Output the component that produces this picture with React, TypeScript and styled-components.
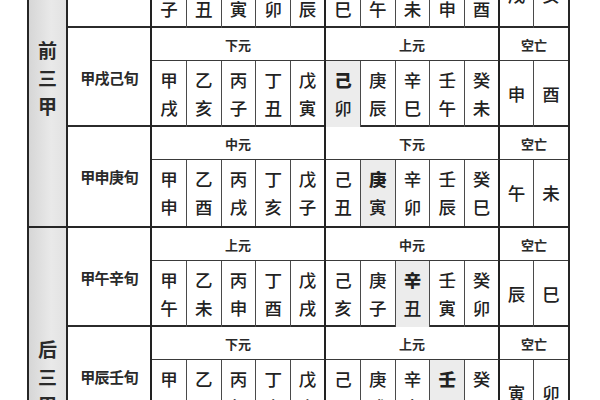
import React from "react";
import styled, { createGlobalStyle } from "styled-components";

const Global = createGlobalStyle`
  html, body { margin: 0; padding: 0; background: #fff; overflow: hidden; }
  body { font-family: "Noto Sans CJK SC", "Noto Sans", sans-serif; color: #1e1e1e; }
`;

const Table = styled.div`
  margin-top: -71px;
  margin-left: 27px;
  width: 543px;
  box-sizing: border-box;
  border-left: 2px solid #262626;
  border-right: 2px solid #262626;
  display: flex;
  flex-direction: column;
`;

const Group = styled.div`
  display: flex;
  border-bottom: 2px solid #262626;
`;

const GroupLabel = styled.div`
  width: 39px;
  box-sizing: border-box;
  border-right: 2px solid #262626;
  background: linear-gradient(to right, #d6d6d6, #e9e9e9 60%, #e2e2e2);
  display: flex;
  flex-direction: column;
  align-items: center;
  justify-content: center;
  font-size: 19px;
  font-weight: 700;
  line-height: 28px;
  color: #2a2a2a;
`;

const Blocks = styled.div`
  display: flex;
  flex-direction: column;
  width: 500px;
`;

const Block = styled.div<{ $last?: boolean }>`
  display: grid;
  grid-template-columns: 84px repeat(10, 34.8px) repeat(2, 34px);
  grid-template-rows: 33px 66px;
  border-bottom: ${(p) => (p.$last ? "none" : "2px solid #2b2b2b")};
  height: 99px;
  box-sizing: border-box;
`;

const Label = styled.div`
  grid-row: 1 / 3;
  grid-column: 1;
  border-right: 2px solid #222;
  display: flex;
  align-items: center;
  justify-content: center;
  font-size: 15px;
  font-weight: 700;
  letter-spacing: -0.6px;
  color: #2a2a2a;
`;

const Header = styled.div<{ $from: number; $to: number; $edge?: boolean }>`
  grid-row: 1;
  grid-column: ${(p) => `${p.$from} / ${p.$to}`};
  border-right: ${(p) => (p.$edge ? "none" : "2px solid #222")};
  border-bottom: 1.5px solid #3a3a3a;
  display: flex;
  align-items: center;
  justify-content: center;
  font-size: 13px;
  font-weight: 700;
  color: #2a2a2a;
`;

const Cell = styled.div<{ $thick?: boolean; $edge?: boolean; $hi?: boolean }>`
  grid-row: 2;
  border-right: ${(p) =>
    p.$edge ? "none" : p.$thick ? "2px solid #222" : "1.3px solid #4a4a4a"};
  background: ${(p) => (p.$hi ? "#ececec" : "transparent")};
  display: flex;
  flex-direction: column;
  align-items: center;
  justify-content: center;
  font-size: 17.5px;
  font-weight: 500;
  line-height: 28px;
  color: #222;
`;

const Stem = styled.span<{ $bold?: boolean }>`
  font-weight: ${(p) => (p.$bold ? 900 : 500)};
`;

const Branch = styled.span``;

type BlockData = {
  label: string;
  left: string;
  right: string;
  branches: string[];
  void: [string, string];
  hi: number;
};

const stems = ["甲", "乙", "丙", "丁", "戊", "己", "庚", "辛", "壬", "癸"];

const groups: { name: string; blocks: BlockData[] }[] = [
  {
    name: "前三甲",
    blocks: [
      {
        label: "甲子乙旬",
        left: "上元",
        right: "中元",
        branches: ["子", "丑", "寅", "卯", "辰", "巳", "午", "未", "申", "酉"],
        void: ["戌", "亥"],
        hi: -1,
      },
      {
        label: "甲戌己旬",
        left: "下元",
        right: "上元",
        branches: ["戌", "亥", "子", "丑", "寅", "卯", "辰", "巳", "午", "未"],
        void: ["申", "酉"],
        hi: 5,
      },
      {
        label: "甲申庚旬",
        left: "中元",
        right: "下元",
        branches: ["申", "酉", "戌", "亥", "子", "丑", "寅", "卯", "辰", "巳"],
        void: ["午", "未"],
        hi: 6,
      },
    ],
  },
  {
    name: "后三甲",
    blocks: [
      {
        label: "甲午辛旬",
        left: "上元",
        right: "中元",
        branches: ["午", "未", "申", "酉", "戌", "亥", "子", "丑", "寅", "卯"],
        void: ["辰", "巳"],
        hi: 7,
      },
      {
        label: "甲辰壬旬",
        left: "下元",
        right: "上元",
        branches: ["辰", "巳", "午", "未", "申", "酉", "戌", "亥", "子", "丑"],
        void: ["寅", "卯"],
        hi: 8,
      },
      {
        label: "甲寅癸旬",
        left: "中元",
        right: "下元",
        branches: ["寅", "卯", "辰", "巳", "午", "未", "申", "酉", "戌", "亥"],
        void: ["子", "丑"],
        hi: 9,
      },
    ],
  },
];

export default function App() {
  return (
    <>
      <Global />
      <Table>
        {groups.map((g) => (
          <Group key={g.name}>
            <GroupLabel>
              {g.name.split("").map((c, i) => (
                <span key={i}>{c}</span>
              ))}
            </GroupLabel>
            <Blocks>
              {g.blocks.map((b, bi) => (
                <Block key={b.label} $last={bi === g.blocks.length - 1}>
                  <Label>{b.label}</Label>
                  <Header $from={2} $to={7}>{b.left}</Header>
                  <Header $from={7} $to={12}>{b.right}</Header>
                  <Header $from={12} $to={14} $edge>空亡</Header>
                  {stems.map((s, i) => (
                    <Cell key={s} $thick={i === 4 || i === 9} $hi={i === b.hi}>
                      <Stem $bold={i === b.hi}>{s}</Stem>
                      <Branch>{b.branches[i]}</Branch>
                    </Cell>
                  ))}
                  <Cell>
                    <Branch>{b.void[0]}</Branch>
                  </Cell>
                  <Cell $edge>
                    <Branch>{b.void[1]}</Branch>
                  </Cell>
                </Block>
              ))}
            </Blocks>
          </Group>
        ))}
      </Table>
    </>
  );
}
